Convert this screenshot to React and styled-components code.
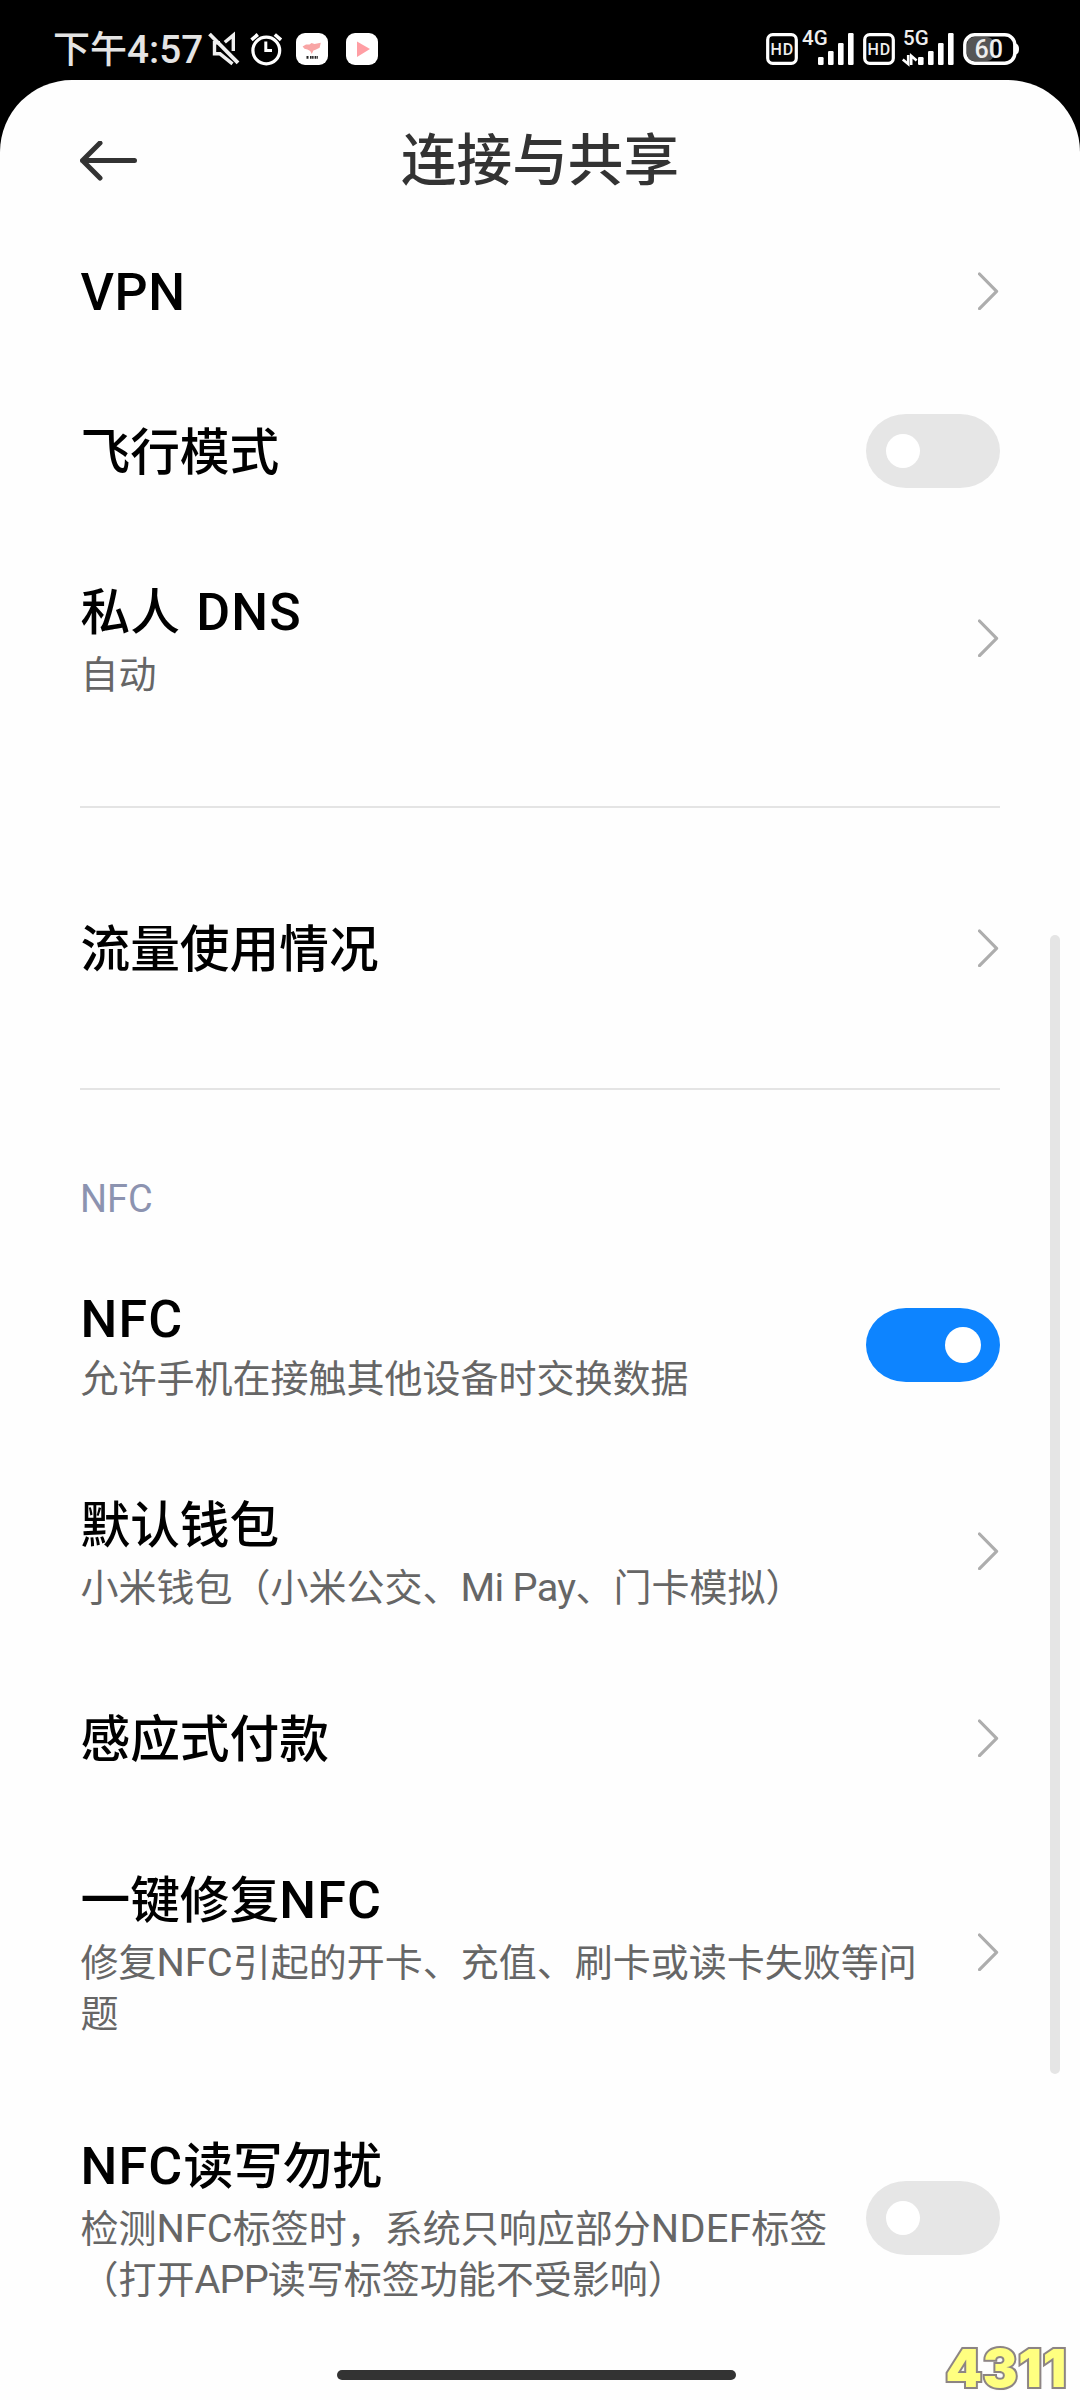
import React from "react";
import styled, { createGlobalStyle } from "styled-components";

const GlobalStyle = createGlobalStyle`
  * { box-sizing: border-box; }
  html, body { margin: 0; padding: 0; background: #000; }
  body { font-family: Roboto, "Noto Sans CJK SC", sans-serif; }
`;

const Screen = styled.div`
  position: relative;
  display: flex;
  flex-direction: column;
  width: 1080px;
  height: 2400px;
  overflow: hidden;
  background: #000;
`;

const StatusBar = styled.header`
  display: flex;
  justify-content: space-between;
  align-items: center;
  height: 80px;
  padding: 18px 60px 0 53px;
`;

const StatusGroup = styled.div`
  display: flex;
  align-items: center;
`;

const Clock = styled.span`
  width: 155px;
  padding-top: 3px;
  font-size: 37px;
  line-height: 50px;
  font-weight: 500;
  color: #e4e4e4;
  white-space: nowrap;
`;

const StatusIcon = styled.svg`
  display: block;
  flex: none;
  overflow: visible;
  margin-left: ${(p) => p.$gap || 0}px;
`;

const SvgText = styled.text`
  font-family: Roboto, sans-serif;
  font-size: ${(p) => p.$size}px;
  font-weight: ${(p) => p.$weight || 500};
  fill: #eee;
`;

const Sheet = styled.main`
  flex: 1;
  display: flex;
  flex-direction: column;
  background: #fefefe;
  border-radius: 72px 72px 0 0;
`;

const TitleBar = styled.div`
  display: grid;
  grid-template-columns: 140px 1fr 140px;
  align-items: center;
  height: 131px;
  padding: 30px 0 0;
`;

const BackButton = styled.button`
  display: flex;
  padding: 0 0 0 80px;
  border: 0;
  background: none;
`;

const PageTitle = styled.h1`
  margin: 0;
  text-align: center;
  font-size: 55.6px;
  line-height: 80px;
  font-weight: 500;
  color: #333;
`;

const Row = styled.section`
  display: flex;
  align-items: center;
  justify-content: space-between;
  height: ${(p) => p.$height}px;
  padding: 0 80px;
`;

const RowText = styled.div`
  display: flex;
  flex-direction: column;
  gap: 3px;
  padding: 4px 0 0 0.5px;
`;

const RowTitle = styled.div`
  font-size: 49.7px;
  line-height: ${(p) => p.$line || 67}px;
  font-weight: 500;
  color: #000;
  white-space: nowrap;
`;

const RowSummary = styled.div`
  font-size: 38px;
  line-height: 51px;
  color: #666;
  white-space: pre;
`;

const Latin = styled.span`
  font-size: 1.045em;
  line-height: 0;
  letter-spacing: ${(p) => p.$track || 0}px;
  margin-left: ${(p) => p.$lead || 0}px;
`;

const Divider = styled.hr`
  width: 920px;
  height: 2px;
  margin: ${(p) => p.$before}px 80px ${(p) => 121 - p.$before}px;
  border: 0;
  background: #e4e4e4;
`;

const Category = styled.h2`
  height: 95px;
  margin: 0;
  padding-left: 80px;
  font-size: 36.3px;
  line-height: 97px;
  font-weight: 400;
  color: #8c93b0;
`;

const Switch = styled.span`
  display: flex;
  flex: none;
  align-items: center;
  justify-content: ${(p) => (p.$on ? "flex-end" : "flex-start")};
  width: 134px;
  height: 74px;
  padding: 0 ${(p) => (p.$on ? 19 : 20)}px;
  border-radius: 40px / 37px;
  background: ${(p) => (p.$on ? "#0d84ff" : "#e6e6e6")};
`;

const Knob = styled.span`
  width: ${(p) => (p.$on ? 36 : 34)}px;
  height: ${(p) => (p.$on ? 36 : 34)}px;
  border-radius: 50%;
  background: #fff;
`;

const ChevronIcon = styled.svg`
  flex: none;
  margin-right: 1px;
`;

const ScrollThumb = styled.div`
  position: absolute;
  top: 935px;
  right: 20px;
  width: 10px;
  height: 1139px;
  border-radius: 5px;
  background: #e5e5e5;
`;

const HomeIndicator = styled.div`
  position: absolute;
  left: 337px;
  bottom: 20px;
  width: 399px;
  height: 10px;
  border-radius: 5px;
  background: #333;
`;

const Stamp = styled.div`
  position: absolute;
  right: 13px;
  bottom: 1px;
  font-family: Inter, sans-serif;
  font-size: 52px;
  line-height: 60px;
  font-weight: 900;
  letter-spacing: 0.8px;
  color: #ffff80;
  -webkit-text-stroke: 4px #8d8584;
  paint-order: stroke fill;
  text-shadow: 0 0 3px #8d8584;
`;

const titleTracking = {
  VPN: { $track: 0.5 },
  NFC: { $track: 1.2 },
  DNS: { $track: 1.2, $lead: 4 },
};
const summaryTracking = {
  "Mi Pay": { $track: -0.7 },
  APP: { $track: -0.9 },
  NDEF: { $track: 0.4 },
};

function Mixed({ text, tracking = {} }) {
  return text
    .split(/([A-Za-z0-9:]+(?: [A-Za-z0-9:]+)*)/)
    .map((part, i) => (i % 2 ? <Latin key={i} {...tracking[part]}>{part}</Latin> : part));
}

function Chevron() {
  return (
    <ChevronIcon width="21" height="38" viewBox="0 0 21 38">
      <path d="M1.5 2 L18.6 19.3 L1.5 36.6" fill="none" stroke="#adadad" strokeWidth="3.2" strokeLinecap="round" strokeLinejoin="round" />
    </ChevronIcon>
  );
}

function Setting({ title, summary, height = 160, line, control = "link" }) {
  return (
    <Row $height={height}>
      <RowText>
        <RowTitle $line={line}><Mixed text={title} tracking={titleTracking} /></RowTitle>
        {summary && <RowSummary><Mixed text={summary} tracking={summaryTracking} /></RowSummary>}
      </RowText>
      {control === "link" ? (
        <Chevron />
      ) : (
        <Switch $on={control === "on"}><Knob $on={control === "on"} /></Switch>
      )}
    </Row>
  );
}

function HdBadge({ gap }) {
  return (
    <StatusIcon $gap={gap} width="32" height="32" viewBox="0 0 32 32">
      <rect x="1.7" y="1.7" width="28.6" height="28.6" rx="5" fill="none" stroke="#fff" strokeWidth="3.2" />
      <SvgText x="4.6" y="21.6" $size={16} textLength="22.6">HD</SvgText>
    </StatusIcon>
  );
}

function Signal({ gap, label, busy }) {
  return (
    <StatusIcon $gap={gap} width="52" height="32" viewBox="0 0 52 32">
      <SvgText x={busy ? 1 : 0} y="12" $size={20.5}>{label}</SvgText>
      {[[16, 24], [26, 18], [36, 10], [46, 0]].map(([x, y]) => (
        <rect key={x} x={x} y={y} width="5.6" height={32 - y} rx="1.2" fill="#fff" />
      ))}
      {busy && (
        <path d="M6.2 22 V31 L0.8 26.6 M9.2 32 V22.8 L14.6 27.4" fill="none" stroke="#fff" strokeWidth="2.6" />
      )}
    </StatusIcon>
  );
}

export default function App() {
  return (
    <Screen>
      <GlobalStyle />
      <StatusBar>
        <StatusGroup>
          <Clock><Mixed text="下午4:57" /></Clock>
          <StatusIcon width="32" height="32" viewBox="0 0 32 32" fill="none" stroke="#f0f0f0" strokeWidth="3.4">
            <path d="M16.8 9.3 L25.3 2.2 V18" />
            <path d="M12 9.8 H6.5 V20.8 H12 L24.5 30.8" />
            <path d="M1.5 1 L30 29.8" strokeWidth="3.8" />
          </StatusIcon>
          <StatusIcon $gap={10} width="32" height="32" viewBox="0 0 32 32" fill="none" stroke="#fff" strokeWidth="3.2">
            <circle cx="16.3" cy="17.5" r="13.4" />
            <path d="M15.8 8.5 V17.5 H22" strokeWidth="3" />
            <path d="M1.5 6.8 L7.8 1.5 M31 6.8 L24.8 1.5" strokeWidth="3.6" />
          </StatusIcon>
          <StatusIcon $gap={14} width="32" height="32" viewBox="0 0 32 32">
            <rect width="32" height="32" rx="9" fill="#fff" />
            <path d="M6.6 13.4 L10 11.4 L13.5 11.6 L15.5 10 L18.5 11 L24.8 9.8 L23.6 14.8 L19.5 16.8 L17.4 17.6 L15.8 21 L14.2 18 L11.4 16.6 L8.5 15.8 Z" fill="#f8a5a5" />
            <path d="M10.5 24.3 H13 M14 24.3 H17.6 M18.6 24.3 H21.8" stroke="#222" strokeWidth="2.8" strokeDasharray="1.6 0.5" />
          </StatusIcon>
          <StatusIcon $gap={18} width="32" height="32" viewBox="0 0 32 32">
            <rect width="32" height="32" rx="9" fill="#fff" />
            <path d="M11 8.5 L24 16 L11 24 Z" fill="#ff9ea4" />
          </StatusIcon>
        </StatusGroup>
        <StatusGroup>
          <HdBadge />
          <Signal gap={4} label="4G" />
          <HdBadge gap={9} />
          <Signal gap={7} label="5G" busy />
          <StatusIcon $gap={9} width="57" height="32" viewBox="0 0 57 32">
            <rect x="4" y="4" width="27" height="24" rx="7" fill="#555" />
            <rect x="1.8" y="1.8" width="50" height="28.4" rx="10" fill="none" stroke="#fff" strokeWidth="3.4" />
            <path d="M53 10.5 Q56 11.5 56 16 Q56 20.5 53 21.5 Z" fill="#fff" />
            <SvgText x="25.8" y="24.8" $size={25} textAnchor="middle">60</SvgText>
          </StatusIcon>
        </StatusGroup>
      </StatusBar>
      <Sheet>
        <TitleBar>
          <BackButton aria-label="返回">
            <svg width="58" height="40" viewBox="0 0 58 40">
              <path d="M20 2 L2.5 19.5 L20 37 M2.5 19.5 H54.5" fill="none" stroke="#333" strokeWidth="5" strokeLinecap="round" strokeLinejoin="round" />
            </svg>
          </BackButton>
          <PageTitle>连接与共享</PageTitle>
        </TitleBar>
        <Setting title="VPN" />
        <Setting title="飞行模式" control="off" />
        <Setting title="私人 DNS" summary="自动" height={214} />
        <Divider $before={61} />
        <Setting title="流量使用情况" />
        <Divider $before={60} />
        <Category><Mixed text="NFC" /></Category>
        <Setting title="NFC" summary="允许手机在接触其他设备时交换数据" height={198} line={61} control="on" />
        <Setting title="默认钱包" summary="小米钱包（小米公交、Mi Pay、门卡模拟）" height={214} />
        <Setting title="感应式付款" />
        <Setting title="一键修复NFC" summary={"修复NFC引起的开卡、充值、刷卡或读卡失败等问\n题"} height={268} />
        <Setting title="NFC读写勿扰" summary={"检测NFC标签时，系统只响应部分NDEF标签\n（打开APP读写标签功能不受影响）"} height={264} control="off" />
      </Sheet>
      <ScrollThumb />
      <HomeIndicator />
      <Stamp>4311</Stamp>
    </Screen>
  );
}
